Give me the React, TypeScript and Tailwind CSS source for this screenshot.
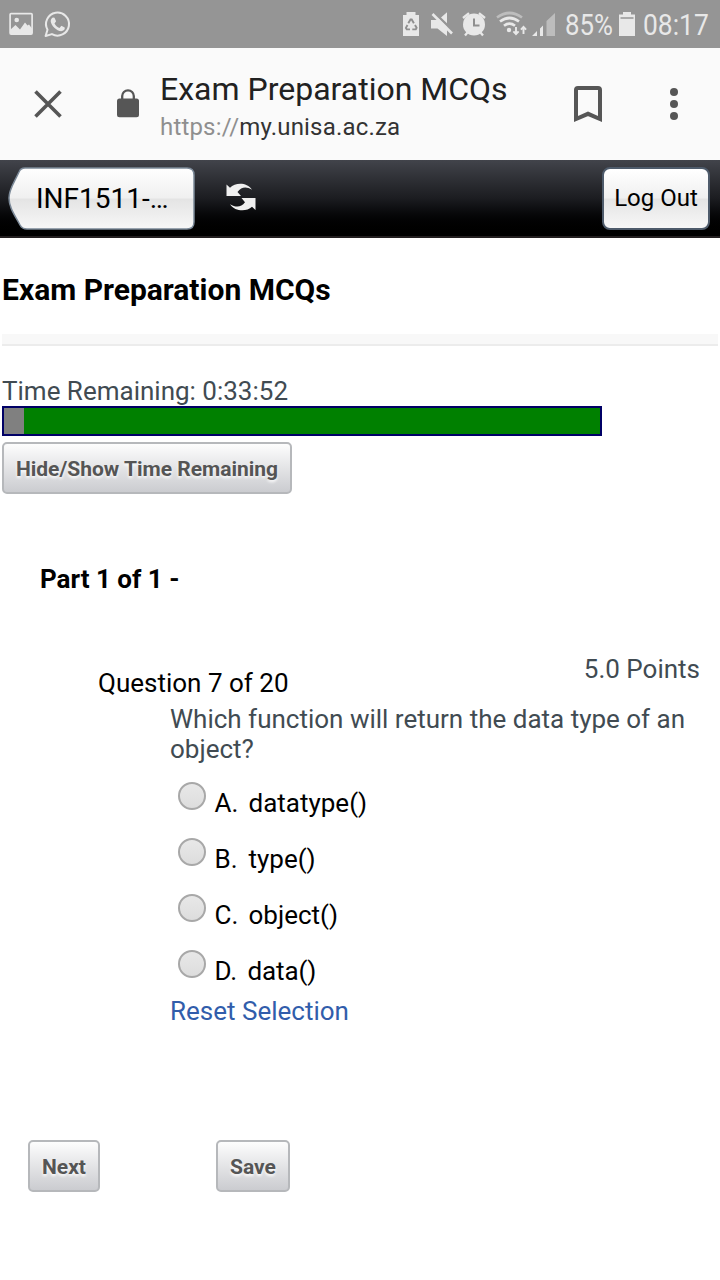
import React from "react";

function StatusBar() {
  return (
    <div className="flex h-12 shrink-0 bg-[#959595] text-[#e8e8e8]">
      <svg className="h-12 w-20" viewBox="0 0 80 48" fill="none">
        <rect x="10.1" y="13.6" width="22" height="20.5" rx="1" stroke="#e8e8e8" strokeWidth="1.7" />
        <circle cx="16.7" cy="20" r="2.3" fill="#e8e8e8" />
        <path d="M10 34v-4l5.500-5 4.500 4.500 5-7 2.500 3 1.500-1 3 4v5.500z" fill="#e8e8e8" />
        <path d="M45.600 36l1.900-6.300a11.500 11.500 0 1 1 4.400 4.400z" stroke="#e8e8e8" strokeWidth="2" strokeLinejoin="round" />
        <path d="M53 17.600l1.500.1 1.600 3.600-1.600 2.200c1.200 2.200 2.700 3.500 5 4.500l1.900-2.200 3.300 1.700c.5 1.500-.8 3.300-2.700 3.600-5 .5-11-5.600-11.300-9.900 0-1.600.9-3 2.300-3.600z" fill="#e8e8e8" />
      </svg>
      <svg className="ml-[310px] h-12 w-[172px]" viewBox="390 0 172 48" fill="none">
        <path d="M403 15h3.500v-3h9v3h3.500v21h-16z" fill="#e8e8e8" />
        <g stroke="#8f8f8f" strokeWidth="1.900">
          <path d="M408.300 23.300l2.200-3.800h1.200l2.200 3.800" />
          <path d="M415 25l1.600 2.800-.8 1.600h-3.500" />
          <path d="M410 29.400h-3.200l-.9-1.500 1.600-2.900" />
        </g>
        <path d="M431 20h5.500l2-1.500 8.500 8.500v9l-9.500-7.500H431zM441 17.500l6-5.200v10.900z" fill="#e8e8e8" />
        <path d="M432.500 14l19.500 19.500" stroke="#e8e8e8" strokeWidth="2.600" />
        <circle cx="474" cy="24.500" r="11" fill="#e8e8e8" />
        <path d="M463 18l6-4.800M485 18l-6-4.800M467.500 32.500l-2.500 3M480.500 32.500l2.500 3" stroke="#e8e8e8" strokeWidth="2.300" />
        <path d="M474 18.500v7h5.500" stroke="#8f8f8f" strokeWidth="2" />
        <path d="M497 17.500q12.500-9 25 0" stroke="#bdbdbd" strokeWidth="2.700" />
        <path d="M500 21.500q9.500-7 19 0M504 25.800q5.500-4.200 11 0" stroke="#e8e8e8" strokeWidth="2.700" />
        <circle cx="509" cy="30" r="2.200" fill="#e8e8e8" />
        <path d="M516 27v7m-2.600-2.600l2.600 2.800 2.600-2.800M523.500 34v-7m-2.600 2.600l2.600-2.800 2.600 2.800" stroke="#e8e8e8" strokeWidth="1.900" />
        <path d="M532 36l5-5v5zM540 28.500l3-3V36h-3z" fill="#e8e8e8" />
        <path d="M546.500 21l8.500-8v23h-8.500z" fill="#bdbdbd" />
      </svg>
      <span className="ml-[3px] w-[51px] origin-left scale-x-[0.89] whitespace-nowrap text-[29px] leading-[50px]">85%</span>
      <svg className="h-12 w-5" viewBox="616 0 20 48" fill="none">
        <path d="M619 14.500h4V12h8v2.500h4V36h-16z" fill="#e8e8e8" />
        <path d="M620.500 18h13" stroke="#aaa" strokeWidth="2" />
      </svg>
      <span className="ml-[7px] w-[70px] origin-left scale-x-[0.91] whitespace-nowrap text-[29px] leading-[50px]">08:17</span>
    </div>
  );
}

function BrowserBar() {
  return (
    <div className="flex h-28 shrink-0 bg-[#fafafa]">
      <svg className="h-28 w-40" viewBox="0 48 160 112" fill="none">
        <path d="M35.500 91.500l25 25m0-25l-25 25" stroke="#565656" strokeWidth="3.600" />
        <rect x="117" y="98.500" width="22" height="18.800" rx="2.500" fill="#565656" />
        <path d="M122.200 99v-3a5.800 5.600 0 0 1 11.600 0v3" stroke="#565656" strokeWidth="2.300" />
      </svg>
      <div className="w-[400px] pt-[25px]">
        <div className="whitespace-nowrap text-[32px] leading-8 text-[#212121]">Exam Preparation MCQs</div>
        <div className="mt-2 whitespace-nowrap text-2xl leading-7 tracking-[0.18px] text-[#333]">
          <span className="text-[#8f8f8f]">https://</span>my.unisa.ac.za
        </div>
      </div>
      <svg className="h-28 w-40" viewBox="560 48 160 112" fill="none">
        <path d="M576 119V90a2 2 0 0 1 2-2h20a2 2 0 0 1 2 2V119l-12-5.200z" stroke="#565656" strokeWidth="4" />
        <g fill="#565656">
          <circle cx="674" cy="92" r="4" />
          <circle cx="674" cy="104" r="4" />
          <circle cx="674" cy="116" r="4" />
        </g>
      </svg>
    </div>
  );
}

function SiteBar() {
  return (
    <div className="flex h-[78px] shrink-0 items-start border-b-2 border-[#231f20] bg-linear-to-b from-[#42444b] via-[#1c1d21] to-black pt-[7px]">
      <div className="relative ml-2 h-[63px] w-[188px]">
        <svg className="absolute inset-0 h-[63px] w-[188px]" viewBox="0 0 188 63">
          <defs>
            <linearGradient id="back" x1="0" y1="0" x2="0" y2="1">
              <stop offset="0" stopColor="#fff" />
              <stop offset=".49" stopColor="#f0f0f0" />
              <stop offset=".51" stopColor="#e4e4e4" />
              <stop offset="1" stopColor="#f7f7f7" />
            </linearGradient>
          </defs>
          <path d="M17 1h162q7 0 7 7v47q0 7-7 7H19q-5 0-7-4C6 47 1 40 1 31S6 16 11 5q1.500-4 6-4z" fill="url(#back)" stroke="#7b8998" strokeWidth="1.500" />
        </svg>
        <span className="relative ml-7 whitespace-nowrap text-[28px] leading-[64px] text-black">INF1511-…</span>
      </div>
      <svg className="ml-7 mt-2 h-11 w-9" viewBox="224 175 36 44" fill="#f0f0f0">
        <path d="M226.500 184.500l3.500 3.200c5.500-5.500 17-5.500 22 2-6-3.500-10.500-2.800-14.500 2.300l3.500 4h-14.500z" />
        <path d="M255.500 210l-3.500-3.200c-5.500 5.200-17 4.900-22-2.600 6 3.500 11 3.200 15-1.900l-3.500-4.300h14z" />
      </svg>
      <button className="ml-auto mr-2.5 h-[63px] w-[108px] rounded-lg border-2 border-[#4e5b6b] bg-[linear-gradient(#fff,#f0f0f0_49%,#e4e4e4_51%,#f7f7f7)] pb-0.5 text-2xl leading-[56px] text-black">
        Log Out
      </button>
    </div>
  );
}

const buttonStyle =
  "h-[52px] rounded-[5px] border-2 border-[#b6b8bb] bg-linear-to-b from-[#fdfdfd] to-[#cbccd0] pt-0.5 text-[21px] font-bold leading-[46px] whitespace-nowrap text-[#555] [text-shadow:0_2px_3px_#ffffff]";

const answers = [
  ["A.", "datatype()"],
  ["B.", "type()"],
  ["C.", "object()"],
  ["D.", "data()"],
];

function Question() {
  return (
    <>
      <div className="mt-[59px] flex h-[50px] justify-between pl-[98px] pr-5">
        <span className="pt-[15px] text-[26px] leading-[30px] text-black">Question 7 of 20</span>
        <span className="pt-px text-[26px] leading-[30px] text-[#414b52]">5.0 Points</span>
      </div>
      <div className="pl-[170px]">
        <p className="whitespace-nowrap pt-px text-[26px] leading-[30px] text-[#414b52]">
          Which function will return the data type of an
          <br />
          object?
        </p>
        <div className="mt-[13px]">
          {answers.map(([letter, text]) => (
            <label key={letter} className="flex h-14 pl-2 last:tracking-[-0.1px]">
              <span className="mt-[5px] size-7 rounded-full border-2 border-[#a8a8a8] bg-linear-to-b from-[#e8e8e8] to-[#dddddd]" />
              <span className={`ml-[8.5px] pt-[11px] text-[26px] leading-[30px] text-black ${letter === "D." ? "w-[33px]" : "w-[34px]"}`}>{letter}</span>
              <span className="pt-[11px] text-[26px] leading-[30px] text-black">{text}</span>
            </label>
          ))}
        </div>
        <a className="mt-[-5px] block text-[26px] leading-[30px] text-[#315dab]">Reset Selection</a>
      </div>
    </>
  );
}

export default function App() {
  return (
    <div className="flex h-[1280px] w-[720px] flex-col overflow-hidden bg-white font-['Roboto',sans-serif]">
      <StatusBar />
      <BrowserBar />
      <SiteBar />
      <h1 className="mt-9 pl-[2px] text-[30px] font-bold leading-8 text-black">Exam Preparation MCQs</h1>
      <div className="ml-0.5 mr-0.5 mt-7 h-3 border-b-2 border-[#ececec] bg-[#f8f8f8]" />
      <div className="mt-[30px] pl-[2px] text-[26px] leading-[30px] text-[#414b52]">Time Remaining: 0:33:52</div>
      <div className="ml-0.5 flex h-[30px] w-[600px] shrink-0 border-2 border-[#000066] bg-[#008000]">
        <div className="w-5 bg-[#808080]" />
      </div>
      <button className={`${buttonStyle} ml-0.5 mt-1.5 w-[290px]`}>Hide/Show Time Remaining</button>
      <h2 className="mt-[70px] pl-10 text-[26px] font-bold leading-[30px] text-black">Part 1 of 1 -</h2>
      <Question />
      <div className="mt-[114px] flex pl-7">
        <button className={`${buttonStyle} w-[72px]`}>Next</button>
        <button className={`${buttonStyle} ml-[116px] w-[74px]`}>Save</button>
      </div>
    </div>
  );
}
